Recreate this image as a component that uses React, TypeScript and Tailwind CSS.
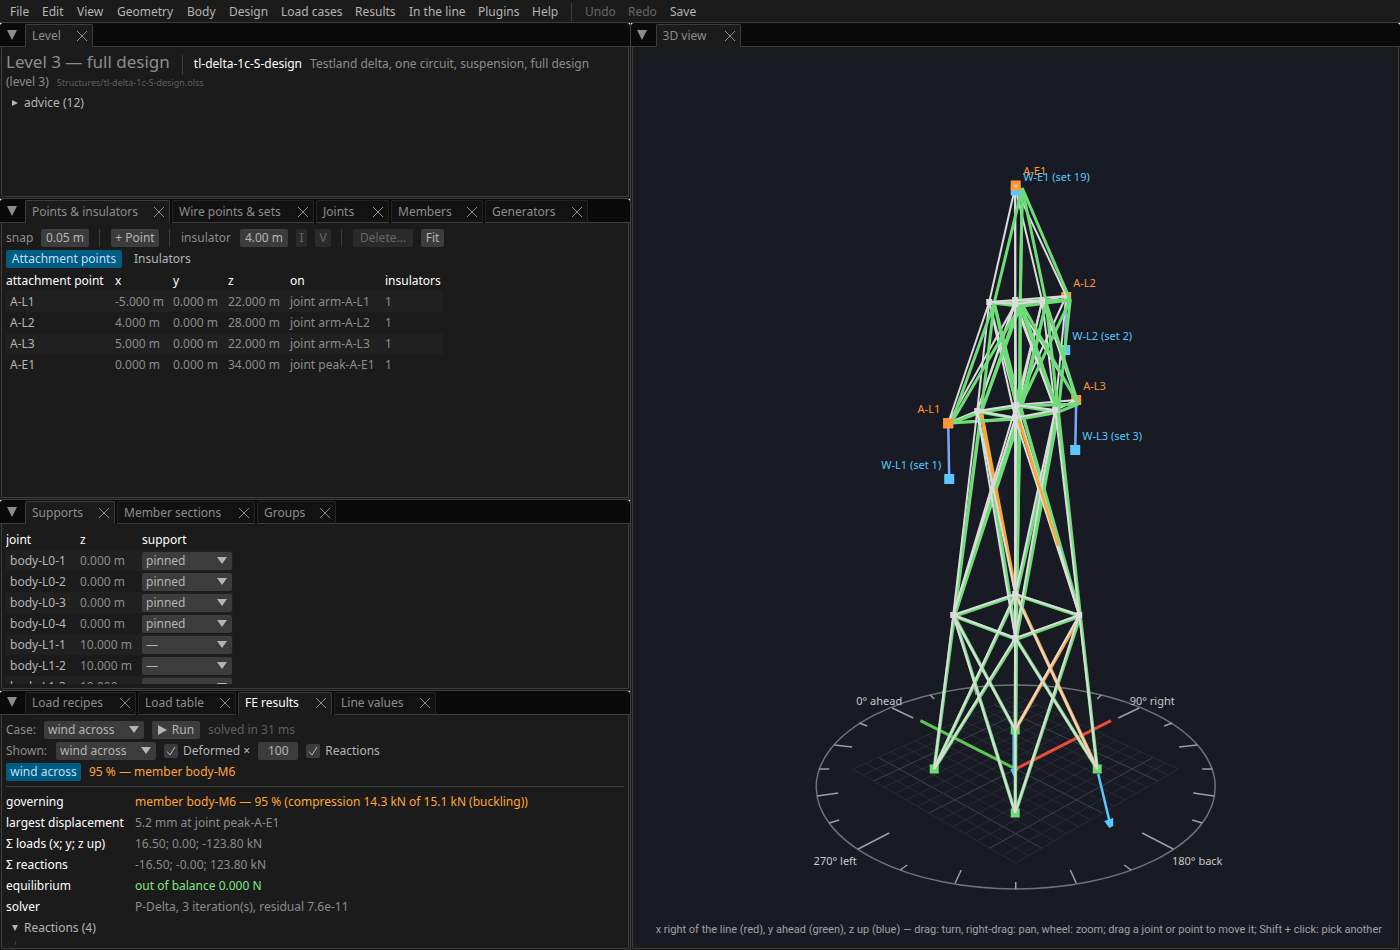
import { useState } from "react";
import type { ReactNode } from "react";

type Point = [number, number];
type Tab = { label: string; width: string };

const menus = [
  { label: "File", width: "w-8" },
  { label: "Edit", width: "w-[35px]" },
  { label: "View", width: "w-10" },
  { label: "Geometry", width: "w-[70px]" },
  { label: "Body", width: "w-[42px]" },
  { label: "Design", width: "w-[52px]" },
  { label: "Load cases", width: "w-[74px]" },
  { label: "Results", width: "w-[54px]" },
  { label: "In the line", width: "w-[69px]" },
  { label: "Plugins", width: "w-[54px]" },
  { label: "Help", width: "w-[39px]" },
];

const attachments = [
  ["A-L1", "-5.000 m", "0.000 m", "22.000 m", "joint arm-A-L1", "1"],
  ["A-L2", "4.000 m", "0.000 m", "28.000 m", "joint arm-A-L2", "1"],
  ["A-L3", "5.000 m", "0.000 m", "22.000 m", "joint arm-A-L3", "1"],
  ["A-E1", "0.000 m", "0.000 m", "34.000 m", "joint peak-A-E1", "1"],
];

const supports = [
  ["body-L0-1", "0.000 m", "pinned"],
  ["body-L0-2", "0.000 m", "pinned"],
  ["body-L0-3", "0.000 m", "pinned"],
  ["body-L0-4", "0.000 m", "pinned"],
  ["body-L1-1", "10.000 m", "—"],
  ["body-L1-2", "10.000 m", "—"],
  ["body-L1-3", "10.000 m", "—"],
];

const results = [
  ["governing", "member body-M6 — 95 % (compression 14.3 kN of 15.1 kN (buckling))", "text-[#ffa537]"],
  ["largest displacement", "5.2 mm at joint peak-A-E1", ""],
  ["Σ loads (x; y; z up)", "16.50; 0.00; -123.80 kN", ""],
  ["Σ reactions", "-16.50; -0.00; 123.80 kN", ""],
  ["equilibrium", "out of balance 0.000 N", "text-[#82e682]"],
  ["solver", "P-Delta, 3 iteration(s), residual 7.6e-11", ""],
];

function Divider() {
  return <span className="mr-[3px] ml-[2px] h-[18px] w-px shrink-0 bg-[#3c3c3c]" />;
}

function CloseIcon() {
  return (
    <svg width="12" height="12" viewBox="0 0 12 12" stroke="currentColor" fill="none">
      <path d="M1 1 11 11M11 1 1 11" />
    </svg>
  );
}

function Panel({
  tabs,
  active,
  focused = false,
  children,
}: {
  tabs: Tab[];
  active: number;
  focused?: boolean;
  children: ReactNode;
}) {
  return (
    <section className="flex min-h-0 min-w-0 flex-col bg-white">
      <div className="flex h-6 shrink-0 rounded-t-[3px] bg-[#0a0a0a]">
        <button aria-label="Panel menu" className="flex w-[25px] items-center justify-center border-b border-[#3c3c3c] pr-[2px] text-[#8c8c8c]">
          <svg width="10" height="10" viewBox="0 0 10 10" fill="currentColor">
            <path d="M0 0h10L5 10z" />
          </svg>
        </button>
        <div role="tablist" className="flex gap-[2px]">
          {tabs.map((tab, i) => (
            <div
              key={tab.label}
              className={`mt-px flex items-center justify-between rounded-t-[2px] border pr-1 pl-[6px] ${tab.width} ${
                i === active
                  ? "border-[#3c3c3c] border-b-[#1b1b1b] bg-[#1b1b1b]"
                  : "border-[#242424] border-b-[#3c3c3c] bg-[#121212]"
              }`}
            >
              <button role="tab" aria-selected={i === active} className={focused && i === active ? "text-white" : "text-[#8c8c8c]"}>
                {tab.label}
              </button>
              <button aria-label={`Close ${tab.label}`} className="text-[#8c8c8c]">
                <CloseIcon />
              </button>
            </div>
          ))}
        </div>
        <div className="grow border-b border-[#3c3c3c]" />
      </div>
      <div className="flex min-h-0 grow bg-[#1b1b1b] px-px pb-px">
        <div className="min-w-0 grow overflow-hidden rounded-b-[2px] border border-t-0 border-[#3c3c3c] px-1 pt-[6px] pb-1">
          {children}
        </div>
      </div>
    </section>
  );
}

function Select({ label, value, options, width }: { label: string; value: string; options: string[]; width: string }) {
  const [current, setCurrent] = useState(value);
  return (
    <span className={`relative inline-flex h-[18px] shrink-0 items-center ${width}`}>
      <select
        aria-label={label}
        value={current}
        onChange={(e) => setCurrent(e.target.value)}
        className="h-[18px] w-full appearance-none rounded-[2px] bg-[#3c3c3c] pl-1 text-[#b4b4b4] outline-none"
      >
        {options.map((o) => (
          <option key={o}>{o}</option>
        ))}
      </select>
      <svg className="pointer-events-none absolute right-[5px]" width="10" height="7" viewBox="0 0 10 7" fill="#b4b4b4">
        <path d="M0 0h10L5 7z" />
      </svg>
    </span>
  );
}

function Check({ label }: { label: string }) {
  const [on, setOn] = useState(true);
  return (
    <label className="flex items-center gap-[5px] text-[#b4b4b4]">
      <span className="relative flex size-[14px]">
        <input
          type="checkbox"
          checked={on}
          onChange={(e) => setOn(e.target.checked)}
          className="size-[14px] appearance-none rounded-[2px] bg-[#3c3c3c]"
        />
        {on && (
          <svg className="pointer-events-none absolute inset-0" width="14" height="14" viewBox="0 0 14 14" fill="none" stroke="#b4b4b4">
            <path d="M3 7.5 6 11 11 3" />
          </svg>
        )}
      </span>
      {label}
    </label>
  );
}

function NumberBox({ label, value, width }: { label: string; value: string; width: string }) {
  return (
    <input
      aria-label={label}
      defaultValue={value}
      className={`h-[18px] rounded-[2px] bg-[#3c3c3c] text-center text-[#b4b4b4] outline-none ${width}`}
    />
  );
}

function ToolButton({ width, disabled, children }: { width: string; disabled?: boolean; children: ReactNode }) {
  return (
    <button
      disabled={disabled}
      className={`flex h-[18px] shrink-0 items-center justify-center rounded-[2px] whitespace-nowrap ${width} ${
        disabled ? "bg-[#2a2a2a] text-[#666666]" : "bg-[#3c3c3c] text-[#b4b4b4]"
      }`}
    >
      {children}
    </button>
  );
}

function LevelPanel() {
  return (
    <Panel tabs={[{ label: "Level", width: "w-[68px]" }]} active={0}>
      <p className="pr-6 leading-[18px]">
        <span className="text-[17px]">Level 3 — full design</span>
        <span className="-my-1 mr-[11px] ml-3 inline-block h-5 w-px bg-[#3c3c3c] align-middle" />
        <strong className="font-normal text-white">tl-delta-1c-S-design</strong>
        <span className="ml-2">Testland delta, one circuit, suspension, full design (level&nbsp;3)</span>
        <small className="ml-2 text-[9px] text-[#5f5f5f]">Structures/tl-delta-1c-S-design.olss</small>
      </p>
      <button className="mt-[2px] flex h-[18px] items-center gap-[6px] pl-[6px] text-[#b4b4b4]">
        <svg width="6" height="6" viewBox="0 0 6 6" fill="currentColor">
          <path d="M0 0v6l6-3z" />
        </svg>
        advice (12)
      </button>
    </Panel>
  );
}

function PointsPanel() {
  return (
    <Panel
      tabs={[
        { label: "Points & insulators", width: "w-[145px]" },
        { label: "Wire points & sets", width: "w-[142px]" },
        { label: "Joints", width: "w-[73px]" },
        { label: "Members", width: "w-[92px]" },
        { label: "Generators", width: "w-[103px]" },
      ]}
      active={0}
    >
      <div className="flex items-center gap-2">
        <span className="w-[27px]">snap</span>
        <NumberBox label="snap" value="0.05 m" width="w-12" />
        <Divider />
        <ToolButton width="w-12">+ Point</ToolButton>
        <Divider />
        <span className="w-[51px]">insulator</span>
        <NumberBox label="insulator" value="4.00 m" width="w-12" />
        <ToolButton width="w-[11px]" disabled>I</ToolButton>
        <ToolButton width="w-4" disabled>V</ToolButton>
        <Divider />
        <ToolButton width="w-[60px]" disabled>Delete…</ToolButton>
        <ToolButton width="w-[23px]">Fit</ToolButton>
      </div>
      <div className="mt-[3px] flex gap-2">
        <button className="h-[18px] w-[116px] rounded-[2px] bg-[#005c80] text-[#c0deff]">Attachment points</button>
        <button className="h-[18px] px-1 text-[#b4b4b4]">Insulators</button>
      </div>
      <table className="mt-[2px] w-[437px] table-fixed text-left whitespace-nowrap">
        <thead>
          <tr className="h-[21px] text-white">
            <th className="w-[109px] p-0 font-normal">attachment point</th>
            <th className="w-[58px] p-0 font-normal">x</th>
            <th className="w-[55px] p-0 font-normal">y</th>
            <th className="w-[62px] p-0 font-normal">z</th>
            <th className="w-[95px] p-0 font-normal">on</th>
            <th className="p-0 font-normal">insulators</th>
          </tr>
        </thead>
        <tbody>
          {attachments.map(([name, ...cells]) => (
            <tr key={name} className="h-[21px] odd:bg-[#202020]">
              <td className="p-0 pl-1 text-[#b4b4b4]">{name}</td>
              {cells.map((cell, i) => (
                <td key={i} className="p-0">{cell}</td>
              ))}
            </tr>
          ))}
        </tbody>
      </table>
    </Panel>
  );
}

function SupportsPanel() {
  return (
    <Panel
      tabs={[
        { label: "Supports", width: "w-[90px]" },
        { label: "Member sections", width: "w-[138px]" },
        { label: "Groups", width: "w-[79px]" },
      ]}
      active={0}
    >
      <div className="h-full overflow-hidden">
        <table className="w-[227px] table-fixed text-left whitespace-nowrap">
          <thead>
            <tr className="h-5 text-white">
              <th className="w-[74px] p-0 font-normal">joint</th>
              <th className="w-[62px] p-0 font-normal">z</th>
              <th className="p-0 font-normal">support</th>
            </tr>
          </thead>
          <tbody>
            {supports.map(([joint, z, kind]) => (
              <tr key={joint} className="h-[21px] odd:bg-[#202020]">
                <td className="p-0 pl-1 text-[#b4b4b4]">{joint}</td>
                <td className="p-0">{z}</td>
                <td className="p-0">
                  <div className="flex">
                    <Select label={`Support of ${joint}`} value={kind} options={["pinned", "—"]} width="w-[90px]" />
                  </div>
                </td>
              </tr>
            ))}
          </tbody>
        </table>
      </div>
    </Panel>
  );
}

function ResultsPanel() {
  return (
    <Panel
      tabs={[
        { label: "Load recipes", width: "w-[111px]" },
        { label: "Load table", width: "w-[98px]" },
        { label: "FE results", width: "w-[94px]" },
        { label: "Line values", width: "w-[102px]" },
      ]}
      active={2}
      focused
    >
      <div className="flex flex-col gap-[3px]">
        <div className="flex items-center gap-2">
          <span className="w-[30px]">Case:</span>
          <Select label="Case" value="wind across" options={["wind across"]} width="w-[100px]" />
          <ToolButton width="w-12">
            <svg className="mr-[5px]" width="9" height="10" viewBox="0 0 9 10" fill="currentColor">
              <path d="M0 0v10l9-5z" />
            </svg>
            Run
          </ToolButton>
          <span className="text-[#5f5f5f]">solved in 31 ms</span>
        </div>
        <div className="flex items-center gap-2">
          <span className="w-[42px]">Shown:</span>
          <Select label="Shown" value="wind across" options={["wind across"]} width="w-[100px]" />
          <Check label="Deformed ×" />
          <NumberBox label="Deformation factor" value="100" width="w-10" />
          <Check label="Reactions" />
        </div>
        <div className="flex items-center gap-2">
          <button className="h-[18px] w-[75px] rounded-[2px] bg-[#005c80] text-[#c0deff]">wind across</button>
          <span className="text-[#ffa537]">95 % — member body-M6</span>
        </div>
      </div>
      <hr className="mt-[5px] mb-[5px] border-[#3c3c3c]" />
      <table className="text-left whitespace-nowrap">
        <tbody>
          {results.map(([name, value, tone]) => (
            <tr key={name} className="h-[21px]">
              <th className="w-[129px] p-0 font-normal text-white">{name}</th>
              <td className={`p-0 ${tone}`}>{value}</td>
            </tr>
          ))}
        </tbody>
      </table>
      <button className="mt-px flex h-[18px] items-center gap-[6px] pl-[6px] text-[#b4b4b4]">
        <svg width="6" height="6" viewBox="0 0 6 6" fill="currentColor">
          <path d="M0 0h6L3 6z" />
        </svg>
        Reactions (4)
      </button>
      <div className="mt-1 ml-[9px] h-1 border-l border-[#3c3c3c]" />
    </Panel>
  );
}

// joint: [undeformed, deformed], screen coordinates
const joints: Record<string, [Point, Point]> = {
  l0: [[934, 769], [934, 769]],
  f0: [[1015, 813], [1015, 813]],
  r0: [[1097, 769], [1097, 769]],
  b0: [[1015, 730], [1015, 730]],
  l1: [[953, 615], [954, 616]],
  f1: [[1015, 638], [1016, 639]],
  r1: [[1079, 615], [1080, 616]],
  b1: [[1015, 594], [1016, 595]],
  l2: [[977, 411], [981, 412]],
  f2: [[1015, 418], [1019, 419]],
  r2: [[1055, 410], [1058, 412]],
  b2: [[1016, 405], [1020, 406]],
  l3: [[989, 302], [994, 303]],
  f3: [[1015, 304], [1020, 306]],
  r3: [[1042, 301], [1046, 303]],
  b3: [[1015, 300], [1020, 301]],
  armL: [[948, 423], [951, 423]],
  armM: [[1066, 296], [1070, 300]],
  armR: [[1076, 400], [1078, 404]],
  peak: [[1015, 187], [1022, 188]],
};

const faces = [["l", "f"], ["f", "r"], ["r", "b"], ["b", "l"]];

const bodyMembers: [string, string][] = [
  ...[0, 1].flatMap((n) => ["l", "f", "r", "b"].map((c): [string, string] => [c + n, c + (n + 1)])),
  ...[0, 1].flatMap((n) =>
    faces.flatMap(([p, q]): [string, string][] => [
      [p + n, q + (n + 1)],
      [q + n, p + (n + 1)],
    ])
  ),
  ...[1, 2, 3].flatMap((n) => faces.map(([p, q]): [string, string] => [p + n, q + n])),
];

const headMembers: [string, string][] = [
  ...["l", "f", "r", "b"].map((c): [string, string] => [c + 2, c + 3]),
  ...faces.flatMap(([p, q]): [string, string][] => [
    [p + 2, q + 3],
    [q + 2, p + 3],
  ]),
  ["armL", "l2"], ["armL", "f2"], ["armL", "l3"], ["armL", "f3"],
  ["armR", "r2"], ["armR", "b2"], ["armR", "r3"], ["armR", "b3"],
  ["armM", "r3"], ["armM", "b3"], ["armM", "r2"], ["armM", "b2"],
  ["peak", "l3"], ["peak", "f3"], ["peak", "r3"], ["peak", "b3"], ["peak", "armM"],
];

// joined lower-upper joint names of the members near their capacity
const stressed = new Set(["b1-l2", "r1-f2", "r0-b1", "b0-r1"]);

const ticks: [number, number, number, number][] = [
  [892, 708, 913, 718],
  [930, 695, 934, 699],
  [859, 723, 867, 726],
  [834, 745, 852, 747],
  [819, 769, 829, 769],
  [817, 796, 838, 793],
  [829, 823, 839, 820],
  [858, 849, 889, 833],
  [900, 870, 907, 865],
  [955, 883, 961, 870],
  [974, 687, 976, 695],
];

const wires: [Point, Point][] = [
  [[948, 423], [949, 479]],
  [[1066, 297], [1065, 350]],
  [[1076, 400], [1075, 450]],
];

// ground plane in perspective
function ground(x: number, y: number) {
  const t = -(x + y) / 7;
  const w = 1 - 0.06 * t;
  return `${1015.5 + (81.5 * (x - y)) / 7 / w} ${769 + (41.4 * t) / w}`;
}

function Square({ at, size, color }: { at: Point; size: number; color: string }) {
  return <rect x={at[0] - size / 2} y={at[1] - size / 2} width={size} height={size} fill={color} />;
}

function line(a: Point, b: Point) {
  return `M${a[0]} ${a[1]}L${b[0]} ${b[1]}`;
}

function Deformed({ members, width }: { members: [string, string][]; width: number }) {
  return members.map(([a, b]) => (
    <path
      key={`${a}-${b}`}
      d={line(joints[a][1], joints[b][1])}
      stroke={stressed.has(`${a}-${b}`) ? "#ffa532" : "#6edc78"}
      strokeWidth={width}
    />
  ));
}

function Undeformed({ members }: { members: [string, string][] }) {
  return members.map(([a, b]) => (
    <path key={`${a}-${b}`} d={line(joints[a][0], joints[b][0])} stroke="#dcdcdc" strokeWidth="2" />
  ));
}

function Tower() {
  const range = Array.from({ length: 15 }, (_, i) => i - 7);
  return (
    <svg className="size-full" viewBox="637 53 757 891" fill="none" role="img" aria-label="Tower in 3D">
      {range.map((i) => (
        <path
          key={i}
          d={`M${ground(i, -7)}L${ground(i, 7)}M${ground(-7, i)}L${ground(7, i)}`}
          stroke={i % 5 === 0 ? "#3e4148" : "#292c34"}
        />
      ))}
      <ellipse cx="1015.5" cy="787" rx="199.5" ry="102" stroke="#6e727c" strokeWidth="1.5" />
      <g stroke="#9a9ea8" strokeWidth="1.5">
        {ticks.map(([x1, y1, x2, y2]) => (
          <path key={`${x1}-${y1}`} d={`M${x1} ${y1}L${x2} ${y2}M${2031 - x1} ${y1}L${2031 - x2} ${y2}`} />
        ))}
        <path d="M1015.5 882v7M1015.5 685v6" />
      </g>
      <path d={`M${ground(0, 0)}L${ground(8.8, 0)}`} stroke="#eb4b3c" strokeWidth="3" />
      <path d={`M${ground(0, 0)}L${ground(0, 8.8)}`} stroke="#5ac850" strokeWidth="3" />

      <g stroke="#5ac8ff" strokeWidth="2.5" fill="#5ac8ff">
        <path d="M1013.5 734V770" />
        <path d="M1010 769h8l-4 9z" stroke="none" />
        <path d="M1098 774 1109 820" />
        <path d="M1104 821l9-3 0 8-4 2z" stroke="none" />
      </g>
      {["l0", "f0", "r0", "b0"].map((id) => (
        <Square key={id} at={joints[id][0]} size={9} color="#6edc78" />
      ))}
      <Deformed members={bodyMembers} width={3.5} />
      {wires.map(([a, b]) => (
        <g key={a[0]}>
          <Square at={a} size={10} color="#ff9637" />
          <path d={line(a, b)} stroke="#78aaff" strokeWidth="2.5" />
          <Square at={b} size={10} color="#5ac8ff" />
        </g>
      ))}
      <Undeformed members={headMembers} />
      <Deformed members={headMembers} width={3} />
      <Undeformed members={bodyMembers} />
      <path d={line([1019, 421], [1058, 546])} stroke="#ffa532" strokeWidth="2.5" />
      <path d={line(joints.f1[0], joints.f3[0])} stroke="#dcdcdc" strokeWidth="2" />
      {["l1", "f1", "r1", "b1", "l2", "f2", "r2", "b2", "l3", "f3", "r3", "b3"].map((id) => (
        <Square key={id} at={joints[id][0]} size={6} color="#dcdcdc" />
      ))}
      <Square at={[1015.5, 190.5]} size={10} color="#5ac8ff" />
      <Square at={[1015.5, 185.5]} size={10} color="#ff9637" />
      <Square at={[1015.5, 186]} size={3} color="#ffc896" />
      <Square at={[948, 423.5]} size={10} color="#ff9637" />

      <g className="text-[11px]" fill="#ff9637">
        <text x="1023" y="175">A-E1</text>
        <text x="1073" y="287">A-L2</text>
        <text x="1083" y="390">A-L3</text>
        <text x="940" y="413" textAnchor="end">A-L1</text>
      </g>
      <g className="text-[11px]" fill="#5ac8ff">
        <text x="1023" y="181">W-E1 (set 19)</text>
        <text x="1072" y="340">W-L2 (set 2)</text>
        <text x="1082" y="440">W-L3 (set 3)</text>
        <text x="941" y="469" textAnchor="end">W-L1 (set 1)</text>
      </g>
      <g className="text-[11px]" fill="#c8c8c8" textAnchor="middle">
        <text x="879" y="705">0° ahead</text>
        <text x="1152" y="705">90° right</text>
        <text x="835" y="865">270° left</text>
        <text x="1197" y="865">180° back</text>
      </g>
    </svg>
  );
}

export default function App() {
  return (
    <div className="flex h-screen flex-col overflow-hidden bg-[#1b1b1b] font-['Noto_Sans','Open_Sans',sans-serif] text-[12px] leading-[18px] text-[#8c8c8c]">
      <nav className="flex h-[23px] shrink-0 items-center border-b border-[#3c3c3c] pt-[2px] pl-[10px] whitespace-nowrap text-[#b4b4b4]">
        {menus.map((m) => (
          <button key={m.label} className={`text-left ${m.width}`}>{m.label}</button>
        ))}
        <span className="mr-[13px] h-[18px] w-px bg-[#3c3c3c]" />
        <button disabled className="w-[43px] text-left text-[#666666]">Undo</button>
        <button disabled className="w-[42px] text-left text-[#666666]">Redo</button>
        <button>Save</button>
      </nav>
      <main className="grid min-h-0 grow grid-cols-[9fr_11fr] gap-px bg-[#3c3c3c]">
        <div className="grid min-h-0 min-w-0 grid-rows-[176fr_301fr_190fr_260fr] gap-px">
          <LevelPanel />
          <PointsPanel />
          <SupportsPanel />
          <ResultsPanel />
        </div>
        <Panel tabs={[{ label: "3D view", width: "w-[85px]" }]} active={0}>
          <div className="relative h-full bg-[#181b23]">
            <Tower />
            <p className="absolute right-3 bottom-[5px] font-[Roboto,sans-serif] text-[11px] whitespace-nowrap text-[#a0a0a0]">
              x right of the line (red), y ahead (green), z up (blue) — drag: turn, right-drag: pan, wheel: zoom; drag a joint or point to move it; Shift + click: pick another
            </p>
          </div>
        </Panel>
      </main>
    </div>
  );
}
